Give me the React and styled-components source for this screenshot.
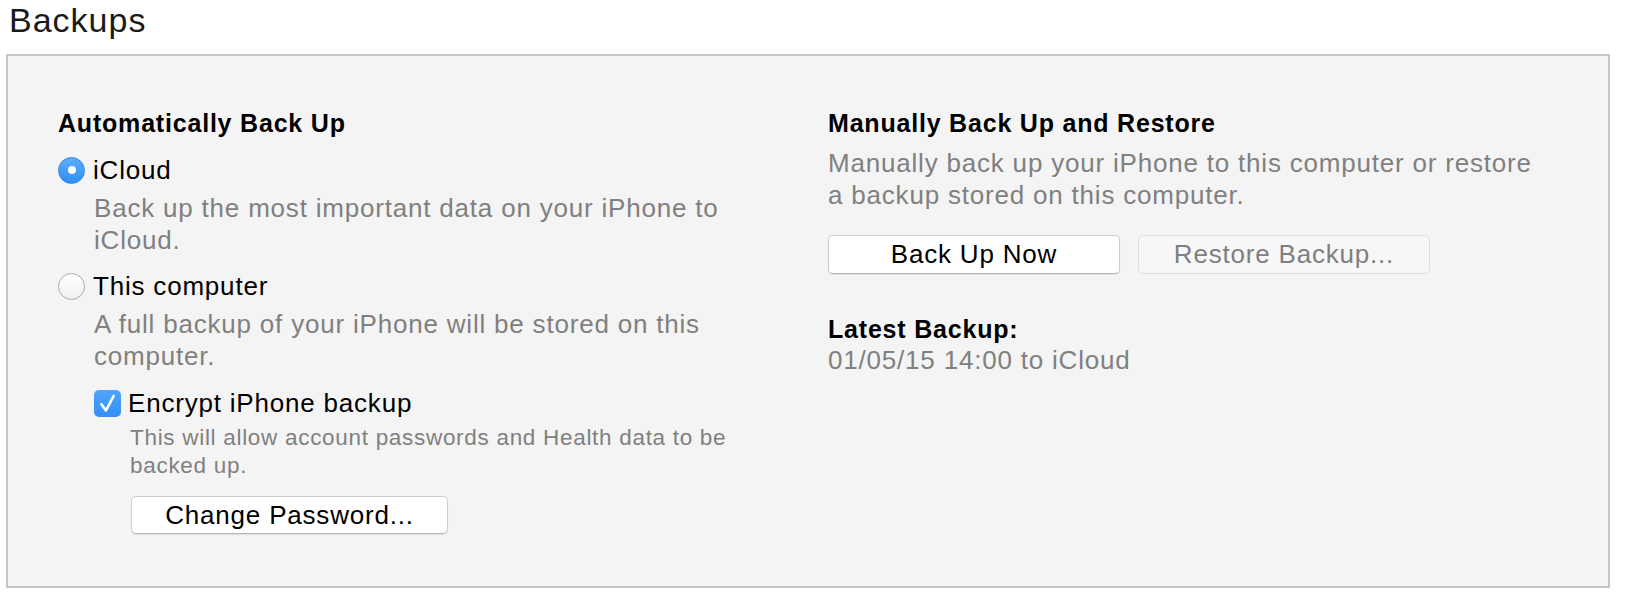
import React from 'react';
import styled, { createGlobalStyle, css } from 'styled-components';

const GlobalStyle = createGlobalStyle`
  body {
    margin: 0;
    background: #ffffff;
    font-family: 'Liberation Sans', Arial, Helvetica, sans-serif;
    color: #000;
  }
`;

const Page = styled.div`
  width: 1638px;
  height: 602px;
  box-sizing: border-box;
  padding: 0 28px 0 6px;
`;

const Title = styled.h1`
  margin: 0 0 14px;
  padding-left: 3px;
  font-size: 34px;
  line-height: 40px;
  font-weight: 400;
  letter-spacing: 1px;
  color: #1a1a1a;
`;

const Panel = styled.section`
  box-sizing: border-box;
  height: 534px;
  border: 2px solid #c6c6c6;
  background: #f4f4f4;
  padding: 52px 0 0 50px;
  display: grid;
  grid-template-columns: 735px 730px;
  column-gap: 35px;
  align-items: start;
`;

const Column = styled.div`
  display: flex;
  flex-direction: column;
  align-items: flex-start;
`;

const Heading = styled.h2`
  margin: ${(p) => p.$top || 0}px 0 0;
  font-size: 25px;
  line-height: 30px;
  font-weight: 700;
  letter-spacing: 0.8px;
  color: #000;
`;

const OptionRow = styled.label`
  display: flex;
  align-items: center;
  gap: ${(p) => p.$gap || 8}px;
  height: 34px;
  margin-top: ${(p) => p.$top || 0}px;
`;

const Label = styled.span`
  font-size: 26px;
  line-height: 34px;
  letter-spacing: 0.8px;
  color: #000;
`;

const Desc = styled.p`
  margin: ${(p) => p.$top || 0}px 0 0 ${(p) => p.$indent || 0}px;
  max-width: ${(p) => p.$width}px;
  font-size: 26px;
  line-height: ${(p) => p.$lh || 31.5}px;
  letter-spacing: 0.8px;
  color: #808080;
`;

const SmallDesc = styled.p`
  margin: 4px 0 0 36px;
  max-width: 624px;
  font-size: 22.5px;
  line-height: 27.6px;
  letter-spacing: 0.7px;
  color: #808080;
`;

const Nested = styled.div`
  display: flex;
  flex-direction: column;
  align-items: flex-start;
  margin-left: 36px;
`;

const RadioDot = styled.span`
  box-sizing: border-box;
  width: 27px;
  height: 27px;
  border-radius: 50%;
  display: flex;
  align-items: center;
  justify-content: center;
  flex-shrink: 0;
  ${(p) =>
    p.$checked
      ? css`
          background: linear-gradient(#5aaefc, #2f8ef3);
          border: 1px solid #2f86e6;
          &::after {
            content: '';
            width: 8px;
            height: 8px;
            border-radius: 50%;
            background: #fff;
          }
        `
      : css`
          background: linear-gradient(#ffffff, #f0f0f0);
          border: 1px solid #a9a9a9;
        `}
`;

const CheckBox = styled.span`
  width: 27px;
  height: 27px;
  border-radius: 5px;
  background: linear-gradient(#4ea5fd, #3590f5);
  display: flex;
  align-items: center;
  justify-content: center;
  flex-shrink: 0;
`;

const Button = styled.button`
  box-sizing: border-box;
  width: ${(p) => p.$width}px;
  height: ${(p) => p.$height || 39}px;
  margin-top: ${(p) => p.$top || 0}px;
  margin-left: ${(p) => p.$left || 0}px;
  padding: 0;
  border-radius: 5px;
  font-family: inherit;
  font-size: 26px;
  letter-spacing: 0.8px;
  background: #ffffff;
  color: #000;
  border: 1px solid #cdcdcd;
  border-bottom-color: #b4b4b4;
  box-shadow: 0 1px 1px rgba(0, 0, 0, 0.08);
  &:disabled {
    background: #f7f7f7;
    color: #7f7f7f;
    border-color: #dedede;
    box-shadow: none;
  }
`;

const ButtonRow = styled.div`
  display: flex;
  gap: 18px;
  margin-top: 24px;
`;

function Radio({ checked }) {
  return <RadioDot $checked={checked} />;
}

function Check() {
  return (
    <CheckBox>
      <svg width="27" height="27" viewBox="0 0 27 27">
        <path
          d="M7.4 14.2 L12 20.4 L19.6 6"
          fill="none"
          stroke="#fff"
          strokeWidth="2.6"
          strokeLinecap="round"
          strokeLinejoin="round"
        />
      </svg>
    </CheckBox>
  );
}

export default function App() {
  return (
    <Page>
      <GlobalStyle />
      <Title>Backups</Title>
      <Panel>
        <Column>
          <Heading>Automatically Back Up</Heading>
          <OptionRow $top={15}>
            <Radio checked />
            <Label>iCloud</Label>
          </OptionRow>
          <Desc $top={6} $indent={36} $width={660}>
            Back up the most important data on your iPhone to iCloud.
          </Desc>
          <OptionRow $top={13}>
            <Radio />
            <Label>This computer</Label>
          </OptionRow>
          <Desc $top={6} $indent={36} $width={660}>
            A full backup of your iPhone will be stored on this computer.
          </Desc>
          <Nested>
            <OptionRow $top={14} $gap={7}>
              <Check />
              <Label>Encrypt iPhone backup</Label>
            </OptionRow>
            <SmallDesc>
              This will allow account passwords and Health data to be backed
              up.
            </SmallDesc>
            <Button $width={317} $height={38} $top={17} $left={37}>
              Change Password...
            </Button>
          </Nested>
        </Column>
        <Column>
          <Heading>Manually Back Up and Restore</Heading>
          <Desc $top={10} $width={712}>
            Manually back up your iPhone to this computer or restore a backup
            stored on this computer.
          </Desc>
          <ButtonRow>
            <Button $width={292}>Back Up Now</Button>
            <Button $width={292} disabled>
              Restore Backup...
            </Button>
          </ButtonRow>
          <Heading $top={40}>Latest Backup:</Heading>
          <Desc $top={2} $width={712} $lh={29}>
            01/05/15 14:00 to iCloud
          </Desc>
        </Column>
      </Panel>
    </Page>
  );
}
